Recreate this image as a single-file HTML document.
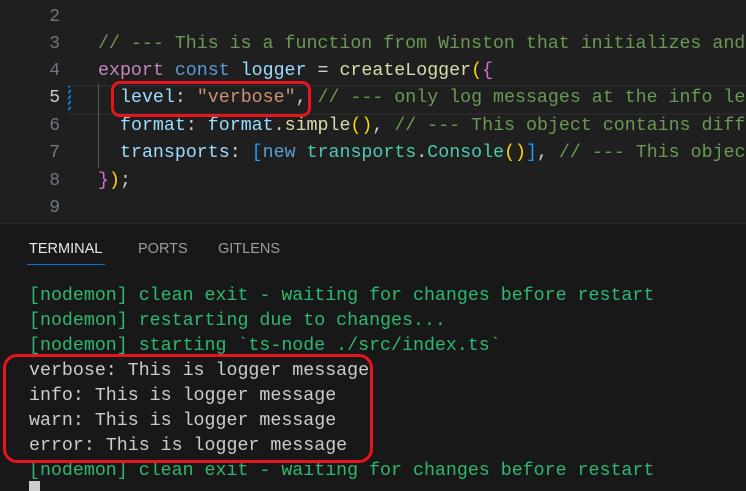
<!DOCTYPE html>
<html><head><style>
body{margin:0;width:746px;height:491px;overflow:hidden;background:#181818;font-family:"Liberation Mono",monospace;}
#ed{position:absolute;left:0;top:0;width:746px;height:223px;background:#1f1f1f;border-bottom:1px solid #2b2b2b;}
.l{position:absolute;white-space:pre;font-size:18.3px;line-height:24px;}
.n{position:absolute;width:60px;text-align:right;color:#6e7681;font-size:18px;line-height:24px;}
.c{color:#6a9955}.k{color:#c586c0}.b{color:#569cd6}.v{color:#9cdcfe}.f{color:#dcdcaa}.s{color:#ce9178}.t{color:#4ec9b0}.w{color:#cccccc}.y{color:#ffd700}.p{color:#da70d6}.bl{color:#179fff}
.g{color:#2db870}
#tab{position:absolute;top:241px;font-family:"Liberation Sans",sans-serif;font-size:14.5px;color:#9d9d9d}
</style></head><body>
<div id="ed">
<div style="position:absolute;left:68px;top:85px;width:678px;height:26px;border-top:2px solid #282828;border-bottom:2px solid #282828"></div>
<div style="position:absolute;left:98px;top:84px;width:1px;height:84px;background:#5a5a5a"></div>
<div style="position:absolute;left:68px;top:86px;width:3px;height:26px;background:repeating-linear-gradient(135deg,#0c7dd6 0 2px,#1f1f1f 2px 4px)"></div>
<div class="n" style="top:5px">2</div>
<div class="n" style="top:32px">3</div>
<div class="n" style="top:59px">4</div>
<div class="n" style="top:86px;color:#ccc">5</div>
<div class="n" style="top:114px">6</div>
<div class="n" style="top:141px">7</div>
<div class="n" style="top:169px">8</div>
<div class="n" style="top:196px">9</div>
<div class="l c" style="left:98px;top:32px">// --- This is a function from Winston that initializes and</div>
<div class="l" style="left:98px;top:59px"><span class="k">export</span> <span class="b">const</span> <span class="v">logger</span> <span class="w">=</span> <span class="f">createLogger</span><span class="y">(</span><span class="p">{</span></div>
<div class="l" style="left:120px;top:86px"><span class="v">level</span><span class="w">: </span><span class="s">"verbose"</span><span class="w">, </span><span class="c">// --- only log messages at the info le</span></div>
<div class="l" style="left:120px;top:114px"><span class="v">format</span><span class="w">: </span><span class="v">format</span><span class="w">.</span><span class="f">simple</span><span class="y">()</span><span class="w">, </span><span class="c">// --- This object contains diff</span></div>
<div class="l" style="left:120px;top:141px"><span class="v">transports</span><span class="w">: </span><span class="bl">[</span><span class="b">new</span> <span class="t">transports</span><span class="w">.</span><span class="t">Console</span><span class="y">()</span><span class="bl">]</span><span class="w">, </span><span class="c">// --- This objec</span></div>
<div class="l" style="left:98px;top:169px"><span class="p">}</span><span class="y">)</span><span class="w">;</span></div>
<div style="position:absolute;left:111px;top:81px;width:194px;height:30px;border:3px solid #e8141e;border-radius:9px"></div>
</div>
<div id="tab" style="left:29px;color:#e7e7e7">TERMINAL</div>
<div style="position:absolute;left:27px;top:264px;width:78px;height:1px;background:#0078d4"></div>
<div id="tab" style="left:138px">PORTS</div>
<div id="tab" style="left:218px">GITLENS</div>
<div class="l g" style="left:29px;top:284px">[nodemon] clean exit - waiting for changes before restart</div>
<div class="l g" style="left:29px;top:309px">[nodemon] restarting due to changes...</div>
<div class="l g" style="left:29px;top:334px">[nodemon] starting `ts-node ./src/index.ts`</div>
<div class="l w" style="left:29px;top:359px">verbose: This is logger message</div>
<div class="l w" style="left:29px;top:384px">info: This is logger message</div>
<div class="l w" style="left:29px;top:409px">warn: This is logger message</div>
<div class="l w" style="left:29px;top:434px">error: This is logger message</div>
<div class="l g" style="left:29px;top:459px">[nodemon] clean exit - waiting for changes before restart</div>
<div style="position:absolute;left:29px;top:481px;width:11px;height:10px;background:#ccc"></div>
<div style="position:absolute;left:3px;top:354px;width:364px;height:103px;border:3px solid #e8141e;border-radius:14px"></div>
</body></html>
